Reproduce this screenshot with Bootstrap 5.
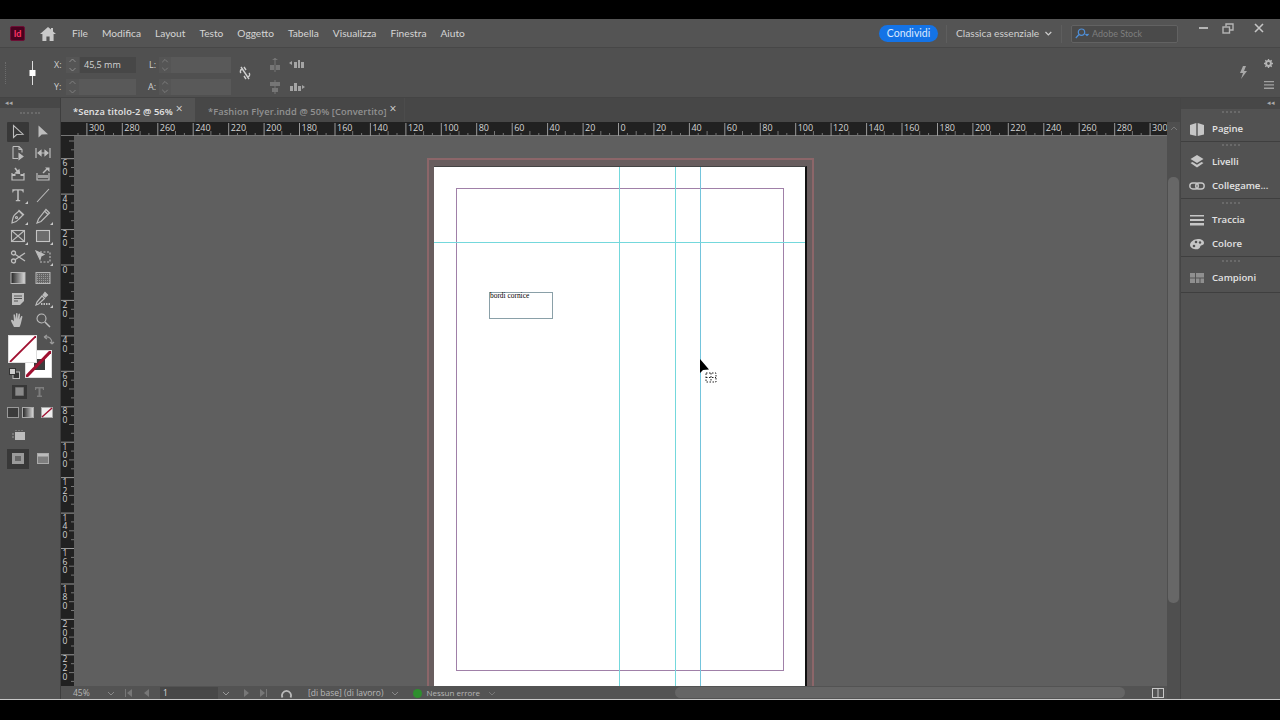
<!DOCTYPE html>
<html lang="it">
<head>
<meta charset="utf-8">
<title>InDesign</title>
<link href="https://cdn.jsdelivr.net/npm/bootstrap@5.3.0/dist/css/bootstrap.min.css" rel="stylesheet">
<style>
html,body{height:100%;margin:0;background:#000;overflow:hidden}
body{font-family:"Open Sans","Liberation Sans",sans-serif;font-size:10.5px;color:#c8c8c8;padding:19px 0 19px}
svg{display:block}
.app{height:681px;background:#535353;border-bottom:1px solid #c9c9c9}
.menubar{height:29px;background:#545454;border-bottom:1px solid #474747;padding:1px 0 0 10px;font-family:Lato,"Open Sans",sans-serif}
.logo{width:15px;height:15px;background:#49021f;border-radius:2px;color:#ff3366;font-size:9px;font-weight:700;line-height:14px;text-align:center;border:1px solid #6d0f35}
.home{margin:0 16px 0 15px}
.menu{gap:14px;color:#d4d4d4;font-size:10.2px}
.share{width:59px;height:17px;background:#1473e6;color:#dbeaff;border-radius:9px;font-size:10.5px;line-height:17px;text-align:center;margin-left:auto}
.vsep{width:1px;height:18px;background:#5e5e5e}
.wk{color:#d0d0d0;font-size:10.2px;margin:0 9px;width:96px;gap:6px;white-space:nowrap}
.stock{width:107px;height:18px;background:#4a4a4a;border:1px solid #626262;border-radius:2px;margin:0 0 0 9px;padding-left:3px;color:#7e7e7e;font-size:9px;gap:3px}
.winbtns{width:102px;align-self:flex-start;height:16px;padding-top:3px;color:#bbb}
.ctrl{height:50px;background:#505050;border-bottom:1px solid #444}
.grip-v{width:1px;height:22px;border-left:1px dotted #6c6c6c;margin-left:5px}
.proxy{width:19px;margin:0 12px 0 17px}
.xf{display:grid;grid-template-columns:12px 13px 57px 23px 12px 60px;grid-auto-rows:16px;row-gap:6px;align-items:center;font-size:9px;margin-top:6px}
.xf b{font-weight:400;color:#cfcfcf}
.spin{height:16px;background:#555}
.fld{height:16px;background:#595959;font-size:9px;color:#d4d4d4;padding-left:4px;line-height:16px}
.fld.on{background:#474747;margin-left:1px}
.lab2{text-align:right;padding-right:3px}
.link{margin-left:8px}
.align{display:grid;grid-template-columns:22px 22px;row-gap:8px;margin:6px 0 0 16px}
.ctrl-r{margin-left:auto;width:41px}
.rcol{gap:13px;margin:2px 6px 0 auto}
.tabstrip{height:24px;background:#474747}
.tab{font-weight:600;font-size:9.3px;padding-top:7px;letter-spacing:.1px;white-space:nowrap;color:#929292;gap:3px}
.tab.on{width:134px;background:#535353;color:#e4e4e4;padding-left:12px}
.tab.off{padding-left:13px;width:210px;border-right:1px solid #4c4c4c}
.tabx{font-size:12px;line-height:8px;font-weight:400;color:#d8d8d8}
.toolcol{width:61px;flex:none;background:#535353;border-right:1px solid #3e3e3e}
.strip{height:10px;background:#474747;color:#aaa;font-size:7px;line-height:9px;padding:0 5px}
.grip{height:7px;width:20px;border-top:2px dotted #6a6a6a;margin:4px auto 0}
.tools{display:grid;grid-template-columns:22px 22px;justify-content:start;margin:3px 0 0 7px;column-gap:3px;grid-auto-rows:20.9px;color:#bdbdbd}
.tools>div{display:flex;align-items:center;justify-content:center;height:20px;position:relative}
.tools .act{background:#383838;border-radius:1px}
.tools .more::after{content:"";position:absolute;right:1px;bottom:1px;border-style:solid;border-width:0 0 3px 3px;border-color:transparent transparent #c8c8c8 transparent}
.colorbox{height:46px;margin:4px 0 0 8px;position:relative}
.sw{position:absolute;background:#fff;border:1px solid #ddd}
.sw1{left:0;top:0;width:29px;height:28px;z-index:2}
.sw2{left:17px;top:15px;width:27px;height:28px}
.row-ic{gap:3px;margin-left:7px;height:20px}
.row-fmt{margin-top:1px}
.row-apply{margin-top:1px}
.fmt-on{width:15px;height:14px;background:#373737;margin-left:5px}
.fmt-t{margin-left:4px}
.preview{margin:6px 0 0 12px}
.viewrow{margin:8px 0 0 7px;gap:8px}
.view-on{width:22px;height:20px;background:#383838}
.over{height:0}
.swap{left:43px;top:-47px}
.deflt{left:9px;top:-13px}
.midcol{min-width:0}
.hruler{height:14px;background:#212121;color:#cfcfcf}
.vruler{width:13px;flex:none;background:#212121;overflow:hidden}
.canvas{background:#5f5f5f;position:relative;overflow:hidden}
.bleed{position:absolute;left:353px;top:22px;width:387px;height:560px;background:#685d5e;border:2px solid #8c6669}
.page{position:absolute;left:360px;top:30px;width:373px;height:540px;background:#fff;border-right:2px solid #111;border-top:1px solid #444}
.margins{position:absolute;left:22px;top:21px;width:328px;height:483px;border:1px solid #a080a8}
.g{position:absolute;background:#74d8dc}
.gv{top:0;bottom:0;width:1px}
.gv1{left:185px}.gv2{left:241px}.gv3{left:266px;background:#74c4dc}
.gh{left:0;right:0;height:1px;top:75px}
.frame{position:absolute;left:55px;top:125px;width:64px;height:27px;border:1px solid #8aa0a8;font-family:"Liberation Serif",serif;font-size:7.4px;line-height:5px;color:#000;background:#fff}
.cursor{position:absolute;left:626px;top:223px;z-index:3}
.status{height:13px;background:#535353;font-size:8.5px;color:#b8b8b8;white-space:nowrap;padding-top:1px}
.st-z{width:46px;padding-left:12px}
.st-f{width:58px;height:12px;background:#474747;color:#ddd;padding-left:3px;line-height:12px;margin-left:10px}
.dot{width:9px;height:9px;border-radius:50%;background:#2e8f2e;margin-left:14px}
.hthumb{position:absolute;left:614px;top:1px;width:450px;height:11px;background:#656565;border-radius:6px}
.m4{margin-left:4px}.m8{margin-left:8px}.m9{margin-left:9px}.m10{margin-left:10px}.m11{margin-left:11px}.m13{margin-left:13px}.m14{margin-left:14px}
.nerr{font-size:8px;margin-left:4px}
.splitic{margin:0 3px 0 auto}
.vscroll{width:13px;flex:none;background:#4f4f4f;position:relative}
.vthumb{position:absolute;left:1px;right:1px;top:55px;height:426px;background:#676767;border-radius:5px}
.side{width:100px;flex:none;background:#525252;border-left:1px solid #454545}
.side .strip{height:11px}
.pgroup{border-bottom:1px solid #3f3f3f}
.pg1{height:33px}.pg2{height:57px}.pg3{height:58px;padding-top:1px}.pg4{height:36px;padding-top:1px}
.pgrip{height:4px;width:18px;margin:2px auto;border-top:2px dotted #6a6a6a}
.pitem{height:24px;gap:7px;padding-left:8px;font-weight:600;font-size:9.6px;color:#e2e2e2;white-space:nowrap}
.pitem svg{flex:none;color:#c6c6c6}
</style>
</head>
<body>
<div class="app d-flex flex-column">
  <div class="menubar d-flex align-items-center">
    <div class="logo">Id</div>
    <svg class="home" width="16" height="14" viewBox="0 0 16 14" fill="#c9c9c9"><path d="M8 0 0 7h2.400v7h4V9.500h3.200V14h4V7H16l-3-2.600V1h-2v1.600z"/></svg>
    <div class="menu d-flex"><span>File</span><span>Modifica</span><span>Layout</span><span>Testo</span><span>Oggetto</span><span>Tabella</span><span>Visualizza</span><span>Finestra</span><span>Aiuto</span></div>
    <div class="share">Condividi</div>
    <div class="vsep ms-2"></div>
    <div class="wk d-flex align-items-center"><span>Classica essenziale</span><svg width="7" height="5" viewBox="0 0 7 5" fill="none" stroke="#ccc" stroke-width="1.300"><path d="m.5 1 3 3 3-3"/></svg></div>
    <div class="vsep"></div>
    <div class="stock d-flex align-items-center"><svg width="14" height="11" viewBox="0 0 14 11" fill="none" stroke="#4f8fd8" stroke-width="1.200"><circle cx="6.500" cy="4.200" r="3.200"/><path d="M4 6.500.8 10"/><path d="m10.500 6 1.500 1.500L13.500 6" fill="#4f8fd8"/></svg><span>Adobe Stock</span></div>
    <div class="winbtns d-flex align-items-start">
      <svg style="margin-left:21px" width="10" height="10" viewBox="0 0 10 10" fill="#b5b5b5"><rect y="4" width="9" height="2"/></svg>
      <svg style="margin-left:13px" width="12" height="11" viewBox="0 0 12 11" fill="none" stroke="#b5b5b5" stroke-width="1.400"><rect x="1" y="4" width="6.500" height="6"/><path d="M4 3.500V1h7v6H8"/></svg>
      <svg style="margin-left:20px" width="10" height="10" viewBox="0 0 10 10" fill="none" stroke="#c4c4c4" stroke-width="1.600"><path d="m1 1 8 8M9 1 1 9"/></svg>
    </div>
  </div>
  <div class="ctrl d-flex align-items-center">
    <div class="grip-v"></div>
    <div class="proxy"><svg width="19" height="28" viewBox="0 0 19 28"><path d="M9.500 2v24" stroke="#ddd" stroke-width="1"/><rect x="6.500" y="11" width="6" height="6" fill="#fff"/></svg></div>
    <div class="xf">
      <b>X:</b><div class="spin"><svg width="13" height="16" viewBox="0 0 13 16" fill="none" stroke="#8e8e8e"><path d="m3.500 5 3-3 3 3M3.500 11l3 3 3-3"/></svg></div><div class="fld on">45,5 mm</div>
      <b class="lab2">L:</b><div class="spin"><svg width="12" height="16" viewBox="0 0 13 16" fill="none" stroke="#7e7e7e"><path d="m3.500 5 3-3 3 3M3.500 11l3 3 3-3"/></svg></div><div class="fld"></div>
      <b>Y:</b><div class="spin"><svg width="13" height="16" viewBox="0 0 13 16" fill="none" stroke="#7e7e7e"><path d="m3.500 5 3-3 3 3M3.500 11l3 3 3-3"/></svg></div><div class="fld"></div>
      <b class="lab2">A:</b><div class="spin"><svg width="12" height="16" viewBox="0 0 13 16" fill="none" stroke="#7e7e7e"><path d="m3.500 5 3-3 3 3M3.500 11l3 3 3-3"/></svg></div><div class="fld"></div>
    </div>
    <svg class="link" width="12" height="14" viewBox="0 0 12 14" fill="none" stroke="#cfcfcf" stroke-width="1.400"><path d="M2 1l8 12M3 3c-2 1-2 3-1 4M9 11c2-1 2-3 1-4M5 1l2 3M5 10l2 3"/></svg>
    <div class="align">
      <svg width="16" height="14" viewBox="0 0 16 14" fill="#767676"><path d="M8 0v14" stroke="#767676"/><path d="M5 2h6l-3-2zM3 7h4v5H3zM9 7h4v5H9z"/></svg>
      <svg width="16" height="14" viewBox="0 0 16 14" fill="#a4a4a4"><path d="M0 5l3-2v4zM5 4h3v6H5zM9 2h2v8H9zM12 4h3v6h-3z"/></svg>
      <svg width="16" height="14" viewBox="0 0 16 14" fill="#767676"><path d="M8 0v14" stroke="#767676"/><path d="M3 2h10v4H3zM5 8h6v4H5z"/></svg>
      <svg width="16" height="14" viewBox="0 0 16 14" fill="#a4a4a4"><path d="M1 6h3v5H1zM5 3h3v8H5zM9 6h3v5H9zM13 5l3 2-3 2z"/></svg>
    </div>
    <div class="ctrl-r d-flex align-items-center">
      <svg width="9" height="13" viewBox="0 0 9 13" fill="#a8a8a8"><path d="M4 0 1 7h3L2 13l6-8H5l2-5z"/></svg>
      <div class="rcol d-flex flex-column">
        <svg width="9" height="9" viewBox="0 0 10 10" fill="none" stroke="#b5b5b5" stroke-width="2.200"><circle cx="5" cy="5" r="2.700"/><path d="M5 0v2M5 8v2M0 5h2M8 5h2M1.500 1.500l1 1M7.500 7.500l1 1M1.500 8.500l1-1M7.500 2.500l1-1" stroke-width="1.500"/></svg>
        <svg width="10" height="8" viewBox="0 0 10 8" fill="#a0a0a0"><path d="M0 0h10v1.300H0zM0 3.300h10v1.300H0zM0 6.600h10V8H0z"/></svg>
      </div>
    </div>
  </div>
  <div class="d-flex flex-grow-1 overflow-hidden">
    <div class="toolcol d-flex flex-column">
      <div class="strip">◂◂</div>
      <div class="grip"></div>
      <div class="tools">
        <div class="act"><svg width="16" height="16" viewBox="0 0 16 16" fill="none" stroke="currentColor" stroke-width="1.100"><path d="M3.500 1.500v12l3.200-3 6.300-.3z"/></svg></div>
        <div><svg width="16" height="16" viewBox="0 0 16 16" fill="currentColor"><path d="M3.500 1.500v12l3.200-3 6.300-.3z"/></svg></div>
        <div><svg width="16" height="16" viewBox="0 0 16 16" fill="none" stroke="currentColor" stroke-width="1.100"><path d="M3 1.500h6l3 3v3M12 4.500H9v-3M3 1.500v12h5"/><path d="M9 8.500v6l4-3z" fill="currentColor"/></svg></div>
        <div><svg width="16" height="16" viewBox="0 0 16 16" fill="none" stroke="currentColor" stroke-width="1.200"><path d="M1 3v10M15 3v10M3 8h10"/><path d="M3 8l3-2.500v5zM13 8l-3-2.500v5z" fill="currentColor"/></svg></div>
        <div><svg width="16" height="16" viewBox="0 0 16 16" fill="none" stroke="currentColor" stroke-width="1.200"><path d="M2 7v7h12V7"/><path d="M2 9h3.500M10.500 9H14" stroke-width="2"/><path d="M5 2l3 4" stroke-width="1.500"/><path d="M9.500 7.500 5.500 7l3.500-3z" fill="currentColor"/></svg></div>
        <div><svg width="16" height="16" viewBox="0 0 16 16" fill="currentColor" stroke="currentColor"><path d="M2 7v7h12V7" fill="none" stroke-width="1.200"/><path d="M3 9h10v3H3z" stroke="none" opacity=".7"/><path d="m8 7 4-4" stroke-width="1.500"/><path d="M10 1.500h4.500V6z" stroke="none"/></svg></div>
        <div class="more"><svg width="14" height="14" viewBox="0 0 16 16" fill="currentColor"><path d="M1.500 1.500h13v3.500h-1c-.2-1.300-.7-2.200-2.300-2.200H8.900v10c0 .7.300.9 1.600 1V15h-5v-1.200c1.300-.1 1.600-.3 1.600-1v-10H4.800c-1.600 0-2.100.9-2.300 2.200h-1z"/></svg></div>
        <div><svg width="16" height="16" viewBox="0 0 16 16" stroke="currentColor" stroke-width="1.100"><path d="M2 15 14 2"/></svg></div>
        <div class="more"><svg width="16" height="16" viewBox="0 0 16 16" fill="none" stroke="currentColor" stroke-width="1.200"><path d="M2 15c.5-4 1-7 3-8.500l4-3.500 4 4-4 4C7.500 13 5 14.500 2 15zM8.500 2l5.500 5"/><circle cx="6.500" cy="9.500" r="1"/></svg></div>
        <div class="more"><svg width="16" height="16" viewBox="0 0 16 16" fill="none" stroke="currentColor" stroke-width="1.200"><path d="M11 1.500l3.500 3.500L6 13.500 2 15l1.500-4zM9.500 3 13 6.500"/></svg></div>
        <div class="more"><svg width="16" height="16" viewBox="0 0 16 16" fill="none" stroke="currentColor" stroke-width="1.100"><rect x="1.500" y="2.500" width="13" height="11"/><path d="m1.500 2.500 13 11M14.500 2.500l-13 11"/></svg></div>
        <div class="more"><svg width="16" height="16" viewBox="0 0 16 16"><rect x="1.500" y="2.500" width="13" height="11" fill="#6c6c6c" stroke="#c4c4c4" stroke-width="1.100"/></svg></div>
        <div><svg width="16" height="16" viewBox="0 0 16 16" fill="none" stroke="currentColor" stroke-width="1.300"><circle cx="3.500" cy="4" r="2"/><circle cx="3.500" cy="12" r="2"/><path d="M5 5.300 15 12M5 10.700 15 4"/></svg></div>
        <div class="more"><svg width="18" height="16" viewBox="0 0 18 16" fill="none" stroke="currentColor" stroke-width="1.100"><path d="M6 3h10v10H6" stroke-dasharray="2 1.500"/><path d="M2 2l8 3.500-3 1.500-1 3.500z" fill="currentColor"/></svg></div>
        <div><svg width="16" height="16" viewBox="0 0 16 16"><defs><linearGradient id="gr"><stop offset="0" stop-color="#222"/><stop offset="1" stop-color="#ddd"/></linearGradient></defs><rect x="1" y="2.500" width="14" height="11" fill="url(#gr)" stroke="#b5b5b5"/></svg></div>
        <div><svg width="16" height="16" viewBox="0 0 16 16"><defs><pattern id="ck" width="2" height="2" patternUnits="userSpaceOnUse"><rect width="2" height="2" fill="#666"/><rect width="1" height="1" fill="#999"/></pattern></defs><rect x="1" y="2.500" width="14" height="11" fill="url(#ck)" stroke="#b5b5b5"/></svg></div>
        <div><svg width="16" height="16" viewBox="0 0 16 16" fill="currentColor"><path d="M2 2h12v8l-4 4H2z"/><path d="M4 5h8M4 7.500h8M4 10h4" stroke="#535353" stroke-width="1.100"/></svg></div>
        <div class="more"><svg width="18" height="16" viewBox="0 0 18 16" fill="none" stroke="currentColor" stroke-width="1.200"><path d="M2 14l1-3 5-6 2.500 2.500-6 5.500z"/><path d="M9 4l2-2.500 2.500 2.500-2 2z" fill="currentColor"/><path d="M7 13h9" stroke-dasharray="1.500 1" stroke-width="2"/></svg></div>
        <div><svg width="16" height="16" viewBox="0 0 16 16" fill="currentColor"><path d="M4 15C2.500 12 1 9.500 1 8.500s1.200-1 2-.2L4 9.500 3.500 3c0-1 1.300-1 1.500 0L6 7V1.800c0-1 1.500-1 1.500 0V7l1-4.800c.2-1 1.500-.8 1.500.2L9.500 7.500l1.500-3c.4-.9 1.600-.5 1.400.5L11 11c-.3 1.500-1 3-1.500 4z"/></svg></div>
        <div><svg width="16" height="16" viewBox="0 0 16 16" fill="none" stroke="currentColor" stroke-width="1.100"><circle cx="6.500" cy="6.500" r="4.500"/><path d="m10 10 5 5" stroke-width="1.500"/></svg></div>
      </div>
      <div class="colorbox">
        <div class="sw sw1"><svg width="27" height="26" viewBox="0 0 27 26"><path d="M1 26 27 0" stroke="#a01030" stroke-width="1.800"/></svg></div>
        <div class="sw sw2"><svg width="25" height="26" viewBox="0 0 25 26"><rect x="8" y="8" width="11" height="11" fill="#3c3c3c"/><path d="M0 26 25 0" stroke="#a01030" stroke-width="3"/></svg></div>
      </div>
      <div class="position-relative over">
        <svg class="position-absolute swap" width="12" height="12" viewBox="0 0 12 12" fill="none" stroke="#9a9a9a" stroke-width="1.200"><path d="M2 3c4-1 7 2 7 6M1 3l3-2M1 3l3 2M9 10l-2-2M9 10l2-2"/></svg>
        <svg class="position-absolute deflt" width="11" height="11" viewBox="0 0 11 11"><rect x="4" y="4" width="6.500" height="6.500" fill="#333" stroke="#bbb"/><rect x=".5" y=".5" width="6" height="6" fill="#ccc" stroke="#333"/></svg>
      </div>
      <div class="d-flex align-items-center row-ic row-fmt">
        <div class="fmt-on d-flex align-items-center justify-content-center"><svg width="9" height="9"><rect width="9" height="9" fill="#8a8a8a" stroke="#555"/></svg></div>
        <svg class="fmt-t" width="11" height="11" viewBox="0 0 11 11" fill="#7d7d7d"><path d="M1 1h9v3H9L8.500 2.500H6.500v7H8V11H3V9.500h1.500v-7h-2L2 4H1z"/></svg>
      </div>
      <div class="d-flex align-items-center row-ic row-apply">
        <svg width="12" height="11"><rect x=".5" y=".5" width="11" height="10" fill="#3c3c3c" stroke="#999"/></svg>
        <svg class="ms-0" width="12" height="11"><rect x=".5" y=".5" width="11" height="10" fill="url(#gr)" stroke="#aaa"/></svg>
        <svg class="m4" width="12" height="11"><rect x=".5" y=".5" width="11" height="10" fill="#eee" stroke="#aaa"/><path d="M1 10 11 1" stroke="#a01030" stroke-width="1.400"/></svg>
      </div>
      <div class="preview"><svg width="14" height="12" viewBox="0 0 14 12"><rect x="3" y="3" width="10" height="8" fill="#bdbdbd"/><path d="M4 1v1M7 1v1M10 1v1M0 5h2M0 8h2" stroke="#999"/></svg></div>
      <div class="viewrow d-flex align-items-center">
        <div class="view-on d-flex align-items-center justify-content-center"><svg width="12" height="11"><rect width="12" height="11" fill="#9a9a9a"/><path d="M3 3h6v5H3z" fill="#666"/></svg></div>
        <svg width="12" height="11"><rect x=".5" y=".5" width="11" height="10" fill="#7e7e7e" stroke="#aaa"/><rect x="1" y="1" width="10" height="2.500" fill="#bbb"/></svg>
      </div>
    </div>
    <div class="midcol flex-grow-1 d-flex flex-column">
      <div class="tabstrip d-flex">
        <div class="tab on d-flex"><span>*Senza titolo-2 @ 56%</span><span class="tabx">×</span></div>
        <div class="tab off d-flex"><span>*Fashion Flyer.indd @ 50% [Convertito]</span><span class="tabx">×</span></div>
      </div>
      <div class="d-flex flex-grow-1 overflow-hidden">
        <div class="d-flex flex-column flex-grow-1 midcol">
          <div class="hruler" id="hr"></div>
          <div class="d-flex flex-grow-1 overflow-hidden">
            <div class="vruler" id="vr"></div>
            <div class="canvas flex-grow-1">
              <div class="bleed"></div>
              <div class="page">
                <div class="margins"></div>
                <div class="g gv gv1"></div><div class="g gv gv2"></div><div class="g gv gv3"></div><div class="g gh"></div>
                <div class="frame">bordi cornice</div>
              </div>
              <svg class="cursor" width="22" height="26" viewBox="0 0 22 26"><path d="M0 0v14l3-3 6-.5z" fill="#000"/><path d="M6 14h10v9H6z" fill="none" stroke="#222" stroke-dasharray="1.500 1.500"/><path d="M11 14v9M6 18.500h10" stroke="#222" stroke-dasharray="1.500 1.500"/></svg>
            </div>
          </div>
          <div class="status d-flex align-items-center position-relative">
            <div class="st-z">45%</div>
            <svg width="8" height="5" viewBox="0 0 8 5" fill="none" stroke="#888"><path d="m1 1 3 3 3-3"/></svg>
            <svg class="m9" width="9" height="8" viewBox="0 0 9 8" fill="#777"><path d="M1 0h1v8H1zM8 0v8L3 4z"/></svg>
            <svg class="m11" width="6" height="8" viewBox="0 0 6 8" fill="#777"><path d="M5 0v8L0 4z"/></svg>
            <div class="st-f">1</div>
            <svg class="m4" width="8" height="5" viewBox="0 0 8 5" fill="none" stroke="#999"><path d="m1 1 3 3 3-3"/></svg>
            <svg class="m13" width="6" height="8" viewBox="0 0 6 8" fill="#777"><path d="M1 0v8l5-4z"/></svg>
            <svg class="m10" width="9" height="8" viewBox="0 0 9 8" fill="#777"><path d="M1 0v8l5-4zM7 0h1v8H7z"/></svg>
            <svg class="m13" width="13" height="11" viewBox="0 0 13 11" fill="none" stroke="#bbb" stroke-width="1.800"><path d="M1.500 9.500a4.500 4.500 0 1 1 8 0"/></svg>
            <span class="m14">[di base] (di lavoro)</span>
            <svg class="m8" width="8" height="5" viewBox="0 0 8 5" fill="none" stroke="#888"><path d="m1 1 3 3 3-3"/></svg>
            <div class="dot"></div>
            <span class="nerr">Nessun errore</span>
            <svg class="m8" width="8" height="5" viewBox="0 0 8 5" fill="none" stroke="#777"><path d="m1 1 3 3 3-3"/></svg>
            <div class="hthumb"></div>
            <svg class="splitic" width="12" height="10" viewBox="0 0 12 10" fill="none" stroke="#c8c8c8"><rect x=".5" y=".5" width="11" height="9"/><path d="M6 0v10"/></svg>
          </div>
        </div>
        <div class="vscroll">
          <div class="vthumb"></div>
          <svg class="mx-auto mt-1" width="8" height="5" viewBox="0 0 8 5" fill="none" stroke="#777"><path d="m1 4 3-3 3 3"/></svg>
        </div>
      </div>
    </div>
    <div class="side d-flex flex-column">
      <div class="strip text-end">◂◂</div>
      <div class="pgroup pg1">
        <div class="pgrip"></div>
        <div class="pitem d-flex align-items-center"><svg width="16" height="14" viewBox="0 0 16 14" fill="currentColor"><path d="M7.300 1v13L1 12.500V3zM8.700 1v13L15 12.500V3z"/></svg><span>Pagine</span></div>
      </div>
      <div class="pgroup pg2">
        <div class="pgrip"></div>
        <div class="pitem d-flex align-items-center"><svg width="16" height="14" viewBox="0 0 16 14" fill="currentColor"><path d="M8 0l6.500 4L8 8 1.500 4z"/><path d="M1.500 8l2-1L8 9.700 12.500 7l2 1L8 12.500z"/></svg><span>Livelli</span></div>
        <div class="pitem d-flex align-items-center"><svg width="16" height="14" viewBox="0 0 16 14" fill="none" stroke="currentColor" stroke-width="1.400"><rect x=".8" y="4" width="8.500" height="6" rx="3"/><rect x="6.700" y="4" width="8.500" height="6" rx="3"/></svg><span>Collegame...</span></div>
      </div>
      <div class="pgroup pg3">
        <div class="pgrip"></div>
        <div class="pitem d-flex align-items-center"><svg width="16" height="14" viewBox="0 0 16 14" fill="currentColor"><path d="M1 2h14v1.600H1zM1 6h14v2H1zM1 10h14v2.500H1z"/></svg><span>Traccia</span></div>
        <div class="pitem d-flex align-items-center"><svg width="16" height="14" viewBox="0 0 16 14" fill="currentColor"><path d="M1 8c0-3 4-6 8-6s6 2 6 4-2 2-3 2.500-.5 2-2 3-3 1-5 .5S1 10 1 8z"/><g fill="#525252"><circle cx="5" cy="9" r="1.300"/><circle cx="7" cy="5" r="1.300"/><circle cx="11" cy="5.500" r="1.200"/></g></svg><span>Colore</span></div>
      </div>
      <div class="pgroup pg4">
        <div class="pgrip"></div>
        <div class="pitem d-flex align-items-center"><svg width="16" height="14" viewBox="0 0 16 14" fill="#8f8f8f"><path d="M1 2h5v4.500H1zM7 2h8v4.500H7zM1 7.500h5V12H1zM7 7.500h3.500V12H7zM11.500 7.500H15V12h-3.500z"/></svg><span>Campioni</span></div>
      </div>
    </div>
  </div>
</div>
<script>
(function(){
 var NS='http://www.w3.org/2000/svg';
 function el(n,a,t){var e=document.createElementNS(NS,n);for(var k in a)e.setAttribute(k,a[k]);if(t!=null)e.textContent=t;return e;}
 var W=1106,k=1.772,z=619-61-0.5;
 var h=el('svg',{width:W,height:14,'font-family':'Open Sans,sans-serif','font-size':'9'});
 h.appendChild(el('rect',{x:0,y:13,width:W,height:1,fill:'#777'}));
 for(var v=-320;v<=320;v+=5){
  var x=z+v*k; if(x<14||x>W-13)continue;
  var m=v%20===0,q=v%10===0;
  h.appendChild(el('path',{d:'M'+x.toFixed(1)+' '+(m?1:(q?9:11))+'V14',stroke:m?'#9a9a9a':'#777','stroke-width':1}));
  if(m)h.appendChild(el('text',{x:(x+2).toFixed(1),y:9,fill:'#d4d4d4'},Math.abs(v)));
 }
 document.getElementById('hr').appendChild(h);
 var r=el('svg',{width:13,height:550,'font-family':'Open Sans,sans-serif','font-size':'8.5'});
 var y0=265-136;
 for(var u=-70;u<=240;u+=5){
  var y=y0+u*1.772; if(y<0)continue;
  var M=u%20===0,Q=u%10===0;
  r.appendChild(el('path',{d:'M'+(M?0:(Q?8:10))+' '+y.toFixed(1)+'H13',stroke:M?'#9a9a9a':'#777'}));
  if(M&&u<=220&&y>12){var s=String(Math.abs(u));for(var i=0;i<s.length;i++)r.appendChild(el('text',{x:1.5,y:(y+7.5+i*8.6).toFixed(1),fill:'#d4d4d4'},s[i]));}
 }
 document.getElementById('vr').appendChild(r);
})();
</script>
</body>
</html>
